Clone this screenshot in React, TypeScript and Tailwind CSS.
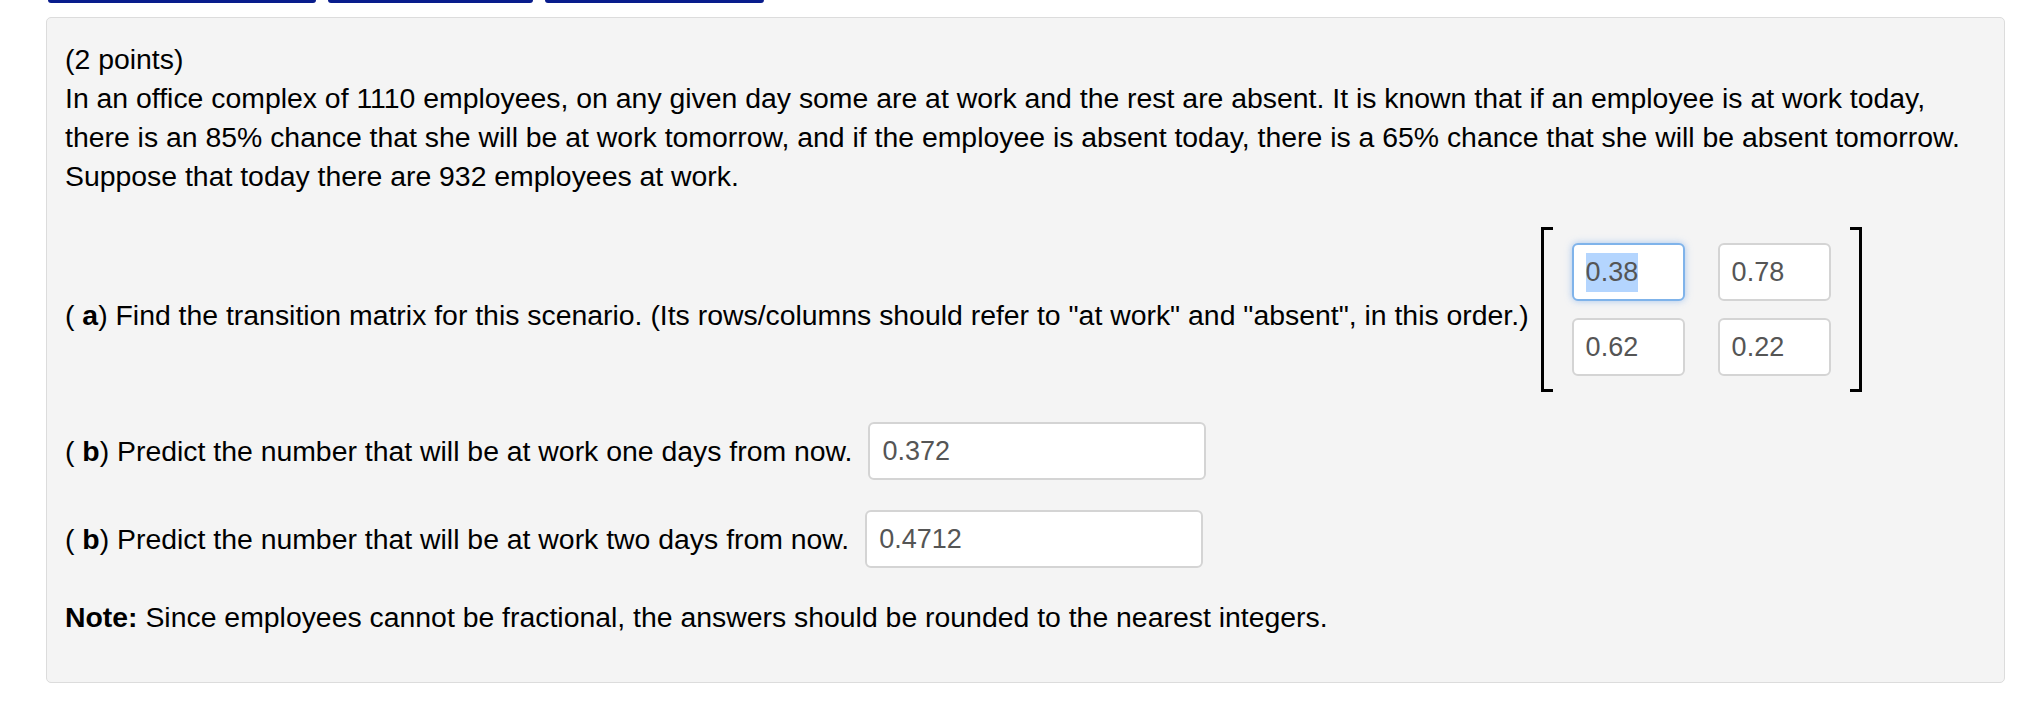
import React from "react";

const font = { fontFamily: '"Liberation Sans", Arial, Helvetica, sans-serif' };

function Field({
	value,
	w,
	focused = false,
}: {
	value: string;
	w: string;
	focused?: boolean;
}) {
	return (
		<div
			className={`${w} h-[58px] bg-white rounded-[6px] border-2 flex items-center pl-[12px] text-[27px] text-[#555] ${
				focused
					? "border-[#7fb3ea] shadow-[0_0_7px_rgba(102,160,233,0.55)]"
					: "border-[#d4d4d4]"
			}`}
		>
			{focused ? <span className="bg-[#b4d5fe]">{value}</span> : value}
		</div>
	);
}

export default function App() {
	return (
		<div className="bg-white min-h-[712px] text-black" style={font}>
			{/* cut-off nav buttons */}
			<div className="flex gap-[12px] pl-[48px] h-[3px]">
				<div className="w-[268px] h-[3px] bg-[#081c8c] rounded-b-[3px]" />
				<div className="w-[205px] h-[3px] bg-[#081c8c] rounded-b-[3px]" />
				<div className="w-[219px] h-[3px] bg-[#081c8c] rounded-b-[3px]" />
			</div>

			<div className="ml-[46px] mt-[14px] w-[1959px] h-[666px] bg-[#f4f4f4] border border-[#dcdcdc] rounded-[5px] px-[18px] pt-[22px] text-[28.4px] leading-[39px]">
				<div>
					(2 points)
					<br />
					In an office complex of 1110 employees, on any given day some are at
					work and the rest are absent. It is known that if an employee is at
					work today,
					<br />
					there is an 85% chance that she will be at work tomorrow, and if the
					employee is absent today, there is a 65% chance that she will be
					absent tomorrow.
					<br />
					Suppose that today there are 932 employees at work.
				</div>

				<div className="flex items-center mt-[31px]">
					<div className="mt-[11px] whitespace-nowrap">
						( <b>a</b>) Find the transition matrix for this scenario. (Its
						rows/columns should refer to "at work" and "absent", in this order.)
					</div>
					<div className="ml-[12px] h-[165px] flex items-stretch">
						<div className="w-[12px] border-l-[3px] border-y-[3px] border-black" />
						<div className="grid grid-cols-[113px_113px] content-center gap-x-[33px] gap-y-[17px] px-[19px]">
							<Field value="0.38" w="w-[113px]" focused />
							<Field value="0.78" w="w-[113px]" />
							<Field value="0.62" w="w-[113px]" />
							<Field value="0.22" w="w-[113px]" />
						</div>
						<div className="w-[12px] border-r-[3px] border-y-[3px] border-black" />
					</div>
				</div>

				<div className="flex items-center gap-[16px] mt-[30px]">
					<div className="whitespace-nowrap">
						( <b>b</b>) Predict the number that will be at work one days from
						now.
					</div>
					<Field value="0.372" w="w-[338px]" />
				</div>

				<div className="flex items-center gap-[16px] mt-[30px]">
					<div className="whitespace-nowrap">
						( <b>b</b>) Predict the number that will be at work two days from
						now.
					</div>
					<Field value="0.4712" w="w-[338px]" />
				</div>

				<div className="mt-[30px]">
					<b>Note:</b> Since employees cannot be fractional, the answers should
					be rounded to the nearest integers.
				</div>
			</div>
		</div>
	);
}
